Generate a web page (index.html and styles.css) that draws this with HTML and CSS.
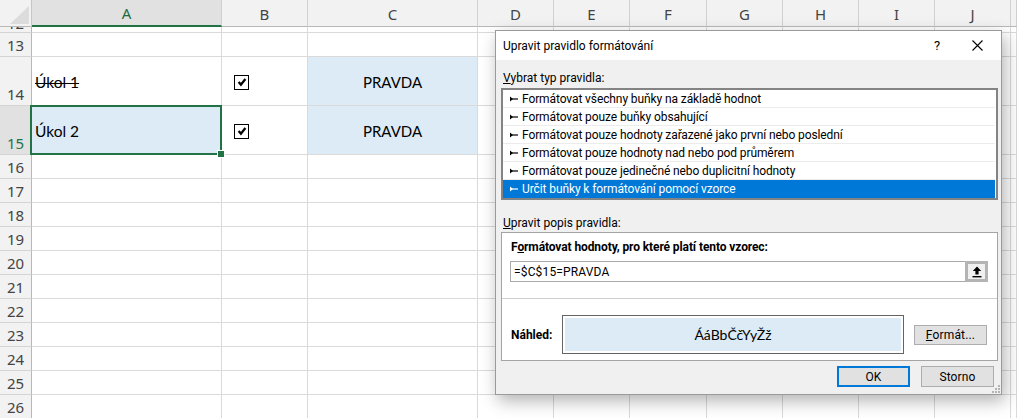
FILE: index.html
```html
<!DOCTYPE html>
<html lang="cs">
<head>
<meta charset="utf-8">
<title>Upravit pravidlo formátování</title>
<link rel="stylesheet" href="styles.css">
</head>
<body>
<div class="sheet">
  <div class="corner"><svg width="19" height="18" viewBox="0 0 19 18"><path d="M19 0 L19 18 L0 18 Z" fill="#dcdcdc"/></svg></div>
  <div class="ch sel">A</div><div class="ch">B</div><div class="ch">C</div><div class="ch">D</div><div class="ch">E</div><div class="ch">F</div><div class="ch">G</div><div class="ch">H</div><div class="ch">I</div><div class="ch">J</div><div class="ch"></div>

  <div class="rh r12">12</div><i></i><i></i><i></i><i></i><i></i><i></i><i></i><i></i><i></i><i></i><i></i>
  <div class="rh">13</div><i></i><i></i><i></i><i></i><i></i><i></i><i></i><i></i><i></i><i></i><i></i>

  <div class="rh">14</div>
  <div class="cell"><s>Úkol 1</s></div>
  <div class="cell cb"><span class="check"><svg width="12" height="12" viewBox="0 0 12 12"><path d="M2.6 6 L4.9 8.6 L9.4 3" fill="none" stroke="#000" stroke-width="2.3"/></svg></span></div>
  <div class="cell hl">PRAVDA</div>
  <i></i><i></i><i></i><i></i><i></i><i></i><i></i><i></i>

  <div class="rh rsel">15</div>
  <div class="cell active">Úkol 2<span class="handle"></span></div>
  <div class="cell cb"><span class="check"><svg width="12" height="12" viewBox="0 0 12 12"><path d="M2.6 6 L4.9 8.6 L9.4 3" fill="none" stroke="#000" stroke-width="2.3"/></svg></span></div>
  <div class="cell hl">PRAVDA</div>
  <i></i><i></i><i></i><i></i><i></i><i></i><i></i><i></i>

  <div class="rh">16</div><i></i><i></i><i></i><i></i><i></i><i></i><i></i><i></i><i></i><i></i><i></i>
  <div class="rh">17</div><i></i><i></i><i></i><i></i><i></i><i></i><i></i><i></i><i></i><i></i><i></i>
  <div class="rh">18</div><i></i><i></i><i></i><i></i><i></i><i></i><i></i><i></i><i></i><i></i><i></i>
  <div class="rh">19</div><i></i><i></i><i></i><i></i><i></i><i></i><i></i><i></i><i></i><i></i><i></i>
  <div class="rh">20</div><i></i><i></i><i></i><i></i><i></i><i></i><i></i><i></i><i></i><i></i><i></i>
  <div class="rh">21</div><i></i><i></i><i></i><i></i><i></i><i></i><i></i><i></i><i></i><i></i><i></i>
  <div class="rh">22</div><i></i><i></i><i></i><i></i><i></i><i></i><i></i><i></i><i></i><i></i><i></i>
  <div class="rh">23</div><i></i><i></i><i></i><i></i><i></i><i></i><i></i><i></i><i></i><i></i><i></i>
  <div class="rh">24</div><i></i><i></i><i></i><i></i><i></i><i></i><i></i><i></i><i></i><i></i><i></i>
  <div class="rh">25</div><i></i><i></i><i></i><i></i><i></i><i></i><i></i><i></i><i></i><i></i><i></i>
  <div class="rh">26</div><i></i><i></i><i></i><i></i><i></i><i></i><i></i><i></i><i></i><i></i><i></i>
</div>

<div class="dlg">
  <div class="dlg-title">
    <span class="dlg-name">Upravit pravidlo formátování</span>
    <span class="help">?</span>
    <span class="close"><svg width="11" height="11" viewBox="0 0 11 11"><path d="M0.5 0.5 L10.5 10.5 M10.5 0.5 L0.5 10.5" stroke="#000" stroke-width="1.1"/></svg></span>
  </div>
  <div class="dlg-body">
    <div class="lbl"><u>V</u>ybrat typ pravidla:</div>
    <ul class="list">
      <li><svg class="arr" width="8" height="6" viewBox="0 0 8 6"><path d="M0 0.5 L3 3 L0 5.5 Z" /><rect x="1" y="2.4" width="7" height="1.2"/></svg>Formátovat všechny buňky na základě hodnot</li>
      <li><svg class="arr" width="8" height="6" viewBox="0 0 8 6"><path d="M0 0.5 L3 3 L0 5.5 Z" /><rect x="1" y="2.4" width="7" height="1.2"/></svg>Formátovat pouze buňky obsahující</li>
      <li><svg class="arr" width="8" height="6" viewBox="0 0 8 6"><path d="M0 0.5 L3 3 L0 5.5 Z" /><rect x="1" y="2.4" width="7" height="1.2"/></svg>Formátovat pouze hodnoty zařazené jako první nebo poslední</li>
      <li><svg class="arr" width="8" height="6" viewBox="0 0 8 6"><path d="M0 0.5 L3 3 L0 5.5 Z" /><rect x="1" y="2.4" width="7" height="1.2"/></svg>Formátovat pouze hodnoty nad nebo pod průměrem</li>
      <li><svg class="arr" width="8" height="6" viewBox="0 0 8 6"><path d="M0 0.5 L3 3 L0 5.5 Z" /><rect x="1" y="2.4" width="7" height="1.2"/></svg>Formátovat pouze jedinečné nebo duplicitní hodnoty</li>
      <li class="on"><svg class="arr" width="8" height="6" viewBox="0 0 8 6"><path d="M0 0.5 L3 3 L0 5.5 Z" /><rect x="1" y="2.4" width="7" height="1.2"/></svg>Určit buňky k formátování pomocí vzorce</li>
    </ul>
    <div class="lbl lbl2"><u>U</u>pravit popis pravidla:</div>
    <div class="group">
      <div class="bold glabel">F<u>o</u>rmátovat hodnoty, pro které platí tento vzorec:</div>
      <div class="formula">
        <div class="inp">=$C$15=PRAVDA</div>
        <div class="pick"><svg width="10" height="12" viewBox="0 0 10 12"><path d="M5 0.5 L0.8 5 H3.4 V8.5 H6.6 V5 H9.2 Z"/><rect x="0.5" y="10" width="9" height="1.4"/></svg></div>
      </div>
      <div class="sep"></div>
      <div class="prev-row">
        <span class="bold nah">Náhled:</span>
        <div class="preview"><div class="pv">ÁáBbČčYyŽž</div></div>
        <button class="btn fmt"><u>F</u>ormát...</button>
      </div>
    </div>
    <div class="actions">
      <button class="btn ok">OK</button>
      <button class="btn">Storno</button>
    </div>
  </div>
  <svg class="grip" width="10" height="10" viewBox="0 0 10 10"><g fill="#b5b5b5"><rect x="8" y="2" width="2" height="2"/><rect x="5" y="5" width="2" height="2"/><rect x="8" y="5" width="2" height="2"/><rect x="2" y="8" width="2" height="2"/><rect x="5" y="8" width="2" height="2"/><rect x="8" y="8" width="2" height="2"/></g></svg>
</div>
</body>
</html>
```
FILE: styles.css
```css
html, body {
  margin: 0;
  padding: 0;
}
body {
  width: 1017px;
  height: 418px;
  overflow: hidden;
  position: relative;
  background: #fff;
  font-family: Lato, "Liberation Sans", sans-serif;
  color: #000;
}

/* ---------- spreadsheet ---------- */
.sheet {
  display: grid;
  grid-template-columns: 32px 190px 86px 170px 76px 76px 77px 76px 76px 76px 76px 1fr;
  grid-template-rows: 27px 6px 24px 49px 49px repeat(11, 24px);
}
.sheet > * {
  box-sizing: border-box;
  border-right: 1px solid #dadada;
  border-bottom: 1px solid #dadada;
  min-width: 0;
}
.corner {
  background: #f2f2f2;
  border-right: 1px solid #c6c6c6 !important;
  border-bottom: 1px solid #b8b8b8 !important;
  display: flex;
  align-items: flex-end;
  justify-content: flex-end;
  padding: 0 2px 2px 0;
}
.corner svg { display: block; }
.ch {
  background: #f2f2f2;
  border-right-color: #d0d0d0 !important;
  border-bottom: 1px solid #b8b8b8 !important;
  font-family: "Noto Sans", sans-serif;
  font-size: 15px;
  color: #444;
  display: flex;
  align-items: center;
  justify-content: center;
  padding-top: 1px;
}
.ch.sel {
  background: #e1e1e1;
  color: #1d6b43;
  border-bottom: 2px solid #217346 !important;
}
.rh {
  background: #f2f2f2;
  border-right: 1px solid #b8b8b8 !important;
  border-bottom-color: #d4d4d4 !important;
  font-family: "Noto Sans", sans-serif;
  font-size: 15px;
  color: #444;
  display: flex;
  align-items: flex-end;
  justify-content: center;
  line-height: 20px;
  overflow: hidden;
  padding-bottom: 1px;
}
.rh.r12 { padding-bottom: 0; line-height: 18px; }
.rh.rsel {
  background: #e1e1e1;
  color: #217346;
}
.cell {
  font-size: 15.5px;
  display: flex;
  align-items: center;
  padding: 2px 3px 0;
}
.cell s { text-decoration-thickness: 1px; }
.cell.hl {
  font-size: 15px;
  background: #ddebf7;
  justify-content: center;
}
.cell.cb {
  padding-left: 12px;
}
.check {
  width: 15px;
  height: 15px;
  box-sizing: border-box;
  border: 1.5px solid #000;
  display: flex;
  align-items: center;
  justify-content: center;
  background: #fff;
}
.check svg { display: block; }
.cell.active {
  background: #ddebf7;
  position: relative;
}
.cell.active::after {
  content: "";
  position: absolute;
  left: -2px;
  top: -1px;
  right: -1px;
  bottom: -1px;
  border: 2px solid #217346;
  pointer-events: none;
}
.handle {
  position: absolute;
  right: -4px;
  bottom: -4px;
  width: 6px;
  height: 6px;
  background: #217346;
  border: 1px solid #fff;
  z-index: 2;
}

/* ---------- dialog ---------- */
.dlg {
  position: absolute;
  left: 495px;
  top: 30px;
  width: 507px;
  height: 365px;
  box-sizing: border-box;
  border: 1px solid #9a9a9a;
  background: #f0f0f0;
  box-shadow: 3px 6px 16px rgba(0, 0, 0, 0.3);
  font-family: Roboto, "Noto Sans", sans-serif;
  font-size: 12px;
  color: #000;
}
.dlg-title {
  height: 29px;
  background: #fff;
  display: flex;
  align-items: center;
  padding-left: 7px;
}
.dlg-name { flex: 1; }
.help {
  width: 20px;
  text-align: center;
  font-size: 13px;
  margin-right: 20px;
}
.close {
  width: 20px;
  display: flex;
  justify-content: center;
  margin-right: 14px;
}
.close svg { display: block; }
.dlg-body {
  padding: 0 0 0 5px;
}
.lbl {
  line-height: 16px;
  padding: 10px 0 2px 2px;
}
.lbl2 { padding-top: 15px; padding-bottom: 1px; }
.list {
  list-style: none;
  margin: 0;
  padding: 0;
  width: 497px;
  height: 112px;
  box-sizing: border-box;
  border: 2px solid #838383;
  background: #fff;
}
.list li {
  height: 18px;
  box-sizing: border-box;
  border-bottom: 1px solid #ececec;
  display: flex;
  align-items: center;
  padding-left: 7px;
  margin-right: 1px;
  white-space: nowrap;
  letter-spacing: -0.1px;
}
.list li .arr {
  margin-right: 4px;
  fill: #000;
  flex: none;
}
.list li.on {
  background: #0078d7;
  color: #fff;
  border-bottom: 0;
}
.list li.on .arr { fill: #fff; }

.group {
  width: 497px;
  height: 129px;
  box-sizing: border-box;
  border: 1px solid #a4a4a4;
  background: #fff;
  padding-top: 6px;
}
.bold { font-weight: bold; }
.glabel {
  line-height: 16px;
  padding-left: 9px;
  letter-spacing: -0.1px;
}
.formula {
  display: flex;
  margin: 6px 0 0 8px;
  height: 21px;
}
.inp {
  width: 455px;
  box-sizing: border-box;
  border: 1px solid #a9a9a9;
  border-right: 0;
  padding-left: 3px;
  display: flex;
  align-items: center;
  background: #fff;
  letter-spacing: 0.15px;
}
.pick {
  width: 23px;
  box-sizing: border-box;
  border: 3px solid #b4b4b4;
  background: #f0f0f0;
  display: flex;
  align-items: center;
  justify-content: center;
}
.pick svg { display: block; fill: #000; }
.sep {
  height: 1px;
  background: #cfcfcf;
  margin: 16px 0 0 0;
}
.prev-row {
  display: flex;
  align-items: center;
  margin-top: 16px;
  padding-left: 9px;
}
.nah { width: 51px; }
.preview {
  width: 342px;
  height: 39px;
  box-sizing: border-box;
  border: 1px solid #646464;
  padding: 2px;
  background: #fff;
}
.pv {
  height: 100%;
  background: #ddebf7;
  display: flex;
  align-items: center;
  justify-content: center;
  font-family: Lato, sans-serif;
  font-size: 14px;
}
.btn {
  font-family: Roboto, "Noto Sans", sans-serif;
  font-size: 12px;
  color: #000;
  width: 73px;
  height: 21px;
  box-sizing: border-box;
  border: 1px solid #adadad;
  background: #e1e1e1;
  padding: 0;
  margin: 0;
  letter-spacing: 0.15px;
}
.fmt { margin-left: 10px; height: 20px; }
.actions {
  display: flex;
  justify-content: flex-end;
  gap: 11px;
  margin-top: 5px;
  padding-right: 7px;
}
.btn.ok { border: 2px solid #0078d7; }
.grip {
  position: absolute;
  right: 1px;
  bottom: 1px;
}
```
